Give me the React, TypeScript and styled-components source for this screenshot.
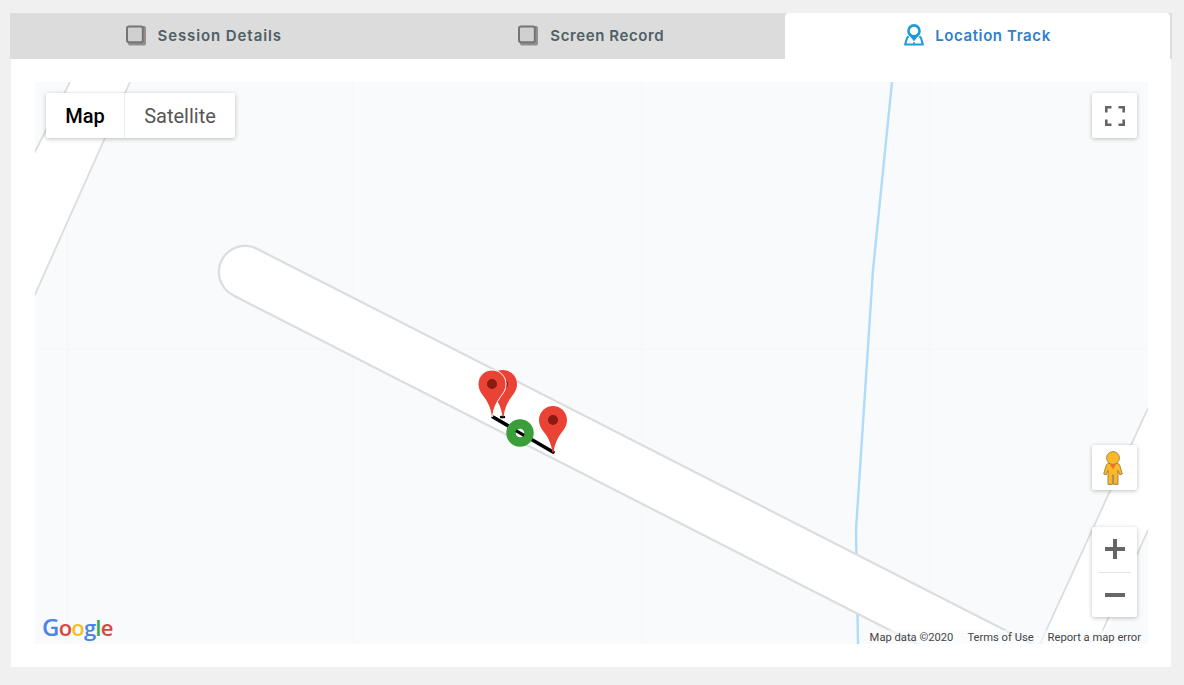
import React from "react";
import styled, { createGlobalStyle } from "styled-components";

const Global = createGlobalStyle`
  html, body { margin: 0; padding: 0; background: #f0f0f0; }
  body { font-family: "Inter", "Liberation Sans", sans-serif; }
`;

const Page = styled.div`
  width: 1184px;
  height: 685px;
  box-sizing: border-box;
  padding: 13px 13px 18px 11px;
  overflow: hidden;
`;

const Card = styled.section`
  height: 654px;
  background: #ffffff;
  display: flex;
  flex-direction: column;
`;

const TabBar = styled.nav`
  display: flex;
  height: 46px;
  margin: 0 -1px;
  padding-right: 2px;
  background: #dcdcdc;
  flex: none;
`;

const Tab = styled.div<{ $active?: boolean }>`
  flex: ${(p) => (p.$active ? "0 0 385px" : "1")};
  display: flex;
  align-items: center;
  justify-content: center;
  gap: 11px;
  padding-bottom: 2px;
  box-sizing: border-box;
  font-size: 15px;
  font-weight: 600;
  color: ${(p) => (p.$active ? "#2f80c8" : "#4f5f66")};
  background: ${(p) => (p.$active ? "#ffffff" : "transparent")};
  border-radius: ${(p) => (p.$active ? "4px 4px 0 0" : "0")};
`;

const TabLabel = styled.span<{ $spacing: number }>`
  letter-spacing: ${(p) => p.$spacing}px;
`;

const Body = styled.div`
  flex: 1;
  padding: 23px 23px 23px 24px;
  display: flex;
`;

const MapBox = styled.div`
  position: relative;
  flex: 1;
  background: #f9fafb;
  overflow: hidden;
  font-family: "Roboto", "Liberation Sans", sans-serif;
`;

const MapDrawing = styled.svg`
  position: absolute;
  inset: 0;
  display: block;
`;

const TypeControl = styled.div`
  position: absolute;
  left: 11px;
  top: 11px;
  display: flex;
  height: 45px;
  background: #fff;
  border-radius: 2px;
  box-shadow: 0 1px 4px rgba(0, 0, 0, 0.25);
`;

const TypeButton = styled.div<{ $active?: boolean }>`
  display: flex;
  align-items: center;
  justify-content: center;
  width: ${(p) => (p.$active ? "78px" : "110px")};
  font-size: 20px;
  color: ${(p) => (p.$active ? "#000000" : "#565656")};
  font-weight: ${(p) => (p.$active ? 500 : 400)};
  border-right: ${(p) => (p.$active ? "1px solid #ebebeb" : "none")};
`;

const ControlButton = styled.div<{ $top: number }>`
  position: absolute;
  right: 11px;
  top: ${(p) => p.$top}px;
  width: 45px;
  height: 45px;
  background: #fff;
  border-radius: 2px;
  box-shadow: 0 1px 4px rgba(0, 0, 0, 0.25);
  display: flex;
  align-items: center;
  justify-content: center;
`;

const ZoomControl = styled.div`
  position: absolute;
  right: 11px;
  top: 445px;
  width: 45px;
  height: 90px;
  background: #fff;
  border-radius: 2px;
  box-shadow: 0 1px 4px rgba(0, 0, 0, 0.25);
  display: flex;
  flex-direction: column;
  align-items: center;
`;

const ZoomStep = styled.div`
  flex: 1;
  display: flex;
  align-items: center;
  justify-content: center;
`;

const ZoomRule = styled.div`
  width: 33px;
  height: 1px;
  background: #e6e6e6;
`;

const Logo = styled.div`
  position: absolute;
  left: 7px;
  bottom: 0;
  font-family: "Open Sans", "Liberation Sans", sans-serif;
  line-height: 28px;
  font-weight: 600;
  letter-spacing: -0.8px;
`;

const LogoLetter = styled.span<{ $c: string; $size: number }>`
  color: ${(p) => p.$c};
  font-size: ${(p) => p.$size}px;
`;

const Attribution = styled.div`
  position: absolute;
  right: 7px;
  bottom: 0;
  height: 14px;
  display: flex;
  align-items: center;
  gap: 14px;
  font-size: 11.2px;
  color: #444;
  background: rgba(249, 250, 251, 0.6);
`;

const Attr = styled.span``;

const PinHolder = styled.svg<{ $x: number; $y: number }>`
  position: absolute;
  left: ${(p) => p.$x}px;
  top: ${(p) => p.$y}px;
  overflow: visible;
`;

const PegmanBox = styled.svg`
  margin-right: 3px;
`;

const Pin = ({ x, y, halo }: { x: number; y: number; halo?: boolean }) => (
  <PinHolder $x={x} $y={y} width={28} height={47} viewBox="0 0 28 47">
    <path
      d="M14 0C6.3 0 0 6.3 0 14c0 5.5 2.5 8.8 6 13.6 3.5 4.8 6.6 11 7.4 19h1.2c.8-8 3.9-14.2 7.4-19C25.5 22.8 28 19.5 28 14 28 6.3 21.7 0 14 0z"
      fill="#ea4335"
      stroke={halo ? "#fff" : "none"}
      strokeWidth={halo ? 1 : 0}
    />
    <circle cx="14" cy="14" r="5" fill="#8a1a12" />
  </PinHolder>
);

const StackIcon = () => (
  <svg width="21" height="21" viewBox="0 0 21 21">
    <path d="M3 1h15a2 2 0 0 1 2 2v15.5a2 2 0 0 1-2 2H4a2 2 0 0 1-2-2" fill="#8f8f8f" />
    <rect x="1" y="1.6" width="15.8" height="15.6" rx="2" fill="#d0d0d0" stroke="#757575" strokeWidth="2" />
  </svg>
);

const LocationIcon = () => (
  <svg width="20" height="22" viewBox="0 0 20 22" fill="none">
    <path
      d="M4.6 12.2 3 14 1.1 20.6H18.9L17 14l-1.6-1.8"
      stroke="#1f9bd7"
      strokeWidth="2"
      strokeLinejoin="round"
    />
    <path d="M4.4 10.2 10 17.2l5.6-7z" fill="#1f9bd7" />
    <circle cx="10" cy="6.9" r="5.5" fill="#fff" stroke="#1f9bd7" strokeWidth="2.6" />
    <path d="M10 20.6V18" stroke="#1f9bd7" strokeWidth="1.4" />
  </svg>
);

const FullscreenIcon = () => (
  <svg width="20" height="20" viewBox="0 0 20 20" fill="none" stroke="#666" strokeWidth="2.6">
    <path d="M1.3 6.5V1.3h5.2M13.5 1.3h5.2v5.2M18.7 13.5v5.2h-5.2M6.5 18.7H1.3v-5.2" />
  </svg>
);

const Pegman = () => (
  <PegmanBox width="20" height="34" viewBox="0 0 20 34">
    <path
      d="M6 12.5h8c1.6 0 2.4.8 2.9 2.2l2.4 8.2-2.4 1L15 19.5V33.4h-4.4V24h-1.2v9.4H5V19.5l-1.9 4.4-2.4-1 2.4-8.2c.5-1.4 1.3-2.2 2.9-2.2z"
      fill="#fdb827"
      stroke="#8f7238"
      strokeWidth="0.8"
      strokeLinejoin="round"
    />
    <circle cx="10" cy="7" r="6.4" fill="#fdb827" stroke="#8f7238" strokeWidth="0.8" />
    <path d="M7 13.2h6l-3 5z" fill="#e0762a" />
  </PegmanBox>
);

const PlusIcon = () => (
  <svg width="20" height="20" viewBox="0 0 20 20">
    <path d="M0 8h8V0h4v8h8v4h-8v8H8v-8H0z" fill="#666" />
  </svg>
);

const MinusIcon = () => (
  <svg width="20" height="4" viewBox="0 0 20 4">
    <rect width="20" height="4" fill="#666" />
  </svg>
);

const logo: [string, string, number][] = [
  ["G", "#4a84e8", 24],
  ["o", "#d9463a", 22],
  ["o", "#f4c020", 22],
  ["g", "#4a84e8", 22],
  ["l", "#36a852", 22],
  ["e", "#d9463a", 22],
];

export default function App() {
  return (
    <>
      <Global />
      <Page>
        <Card>
          <TabBar>
            <Tab>
              <StackIcon />
              <TabLabel $spacing={0.9}>Session Details</TabLabel>
            </Tab>
            <Tab>
              <StackIcon />
              <TabLabel $spacing={0.6}>Screen Record</TabLabel>
            </Tab>
            <Tab $active>
              <LocationIcon />
              <TabLabel $spacing={0.6}>Location Track</TabLabel>
            </Tab>
          </TabBar>
          <Body>
            <MapBox>
              <MapDrawing width="1113" height="562" viewBox="0 0 1113 562" fill="none">
                <g stroke="#f4f6f7" strokeWidth="1">
                  <path d="M32 0V562M318 0V562M607 0V562M895 0V562M0 267H1113" />
                </g>
                <path d="M35 0-25 120-15 246 95 0z" fill="#fff" />
                <path d="M35 0-25 120M95 0-15 246" stroke="#dcddde" strokeWidth="1.8" />
                <path d="M1113 326 1005 562H1067L1113 448z" fill="#fff" />
                <path d="M1113 326 1005 562M1113 448 1067 550" stroke="#dcddde" strokeWidth="1.8" />
                <path d="M857 0 838 188 821 448 823 562" stroke="#aedcfa" strokeWidth="2.4" strokeLinejoin="round" />
                <path d="M210 190 1065 626" stroke="#dcddde" strokeWidth="54.5" strokeLinecap="round" />
                <path d="M210 190 1065 626" stroke="#ffffff" strokeWidth="50" strokeLinecap="round" />
                <path d="M458 335 518 370" stroke="#000" strokeWidth="3.6" strokeLinecap="round" />
                <path d="M466 335h3" stroke="#000" strokeWidth="2.4" strokeLinecap="round" />
                <circle cx="485" cy="351" r="9" stroke="#3a9e3a" strokeWidth="9.5" fill="#fff" />
                <path d="M481 348.6 489 353.4" stroke="#000" strokeWidth="3" />
              </MapDrawing>
              <Pin x={454} y={288} />
              <Pin x={443} y={288} halo />
              <Pin x={504} y={324} />
              <TypeControl>
                <TypeButton $active>Map</TypeButton>
                <TypeButton>Satellite</TypeButton>
              </TypeControl>
              <ControlButton $top={11}>
                <FullscreenIcon />
              </ControlButton>
              <ControlButton $top={363}>
                <Pegman />
              </ControlButton>
              <ZoomControl>
                <ZoomStep>
                  <PlusIcon />
                </ZoomStep>
                <ZoomRule />
                <ZoomStep>
                  <MinusIcon />
                </ZoomStep>
              </ZoomControl>
              <Logo>
                {logo.map(([l, c, s], i) => (
                  <LogoLetter key={i} $c={c} $size={s}>
                    {l}
                  </LogoLetter>
                ))}
              </Logo>
              <Attribution>
                <Attr>Map data ©2020</Attr>
                <Attr>Terms of Use</Attr>
                <Attr>Report a map error</Attr>
              </Attribution>
            </MapBox>
          </Body>
        </Card>
      </Page>
    </>
  );
}
